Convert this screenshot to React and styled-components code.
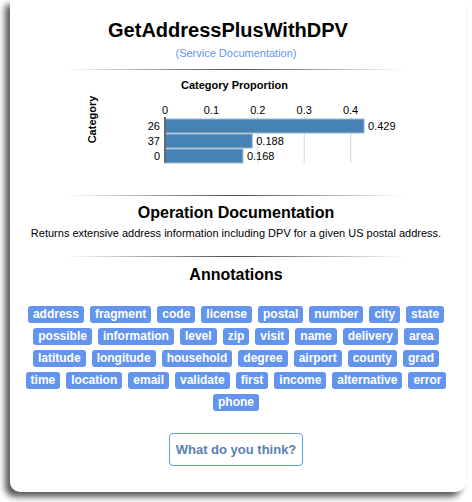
import React from 'react';
import styled, { createGlobalStyle } from 'styled-components';

const GlobalStyle = createGlobalStyle`
  html, body {
    margin: 0;
    padding: 0;
    background: #ffffff;
  }

  body {
    font-family: "Liberation Sans", Arial, sans-serif;
    color: #000;
  }
`;

const Page = styled.div`
  padding: 0 6px 10px 10px;
`;

const Card = styled.div`
  background: #fff;
  border-radius: 0 0 10px 10px;
  box-shadow: -5px 5px 6px rgba(0, 0, 0, 0.65);
  padding: 19px 4px 26px 0;
  display: flex;
  flex-direction: column;
  align-items: center;
  text-align: center;
`;

const Title = styled.h1`
  margin: 0;
  font-size: 20px;
  line-height: 23px;
  font-weight: bold;
  padding-right: 16px;
`;

const ServiceLink = styled.a`
  margin-top: 5px;
  font-size: 11px;
  line-height: 13px;
  color: #6495ed;
  text-decoration: none;
`;

const Divider = styled.hr`
  border: 0;
  height: 1px;
  width: 340px;
  margin: ${p => p.$top}px 0 0 -2px;
  background: linear-gradient(to right, rgba(0, 0, 0, 0), rgba(0, 0, 0, 0.7), rgba(0, 0, 0, 0));
`;

const ChartSvg = styled.svg`
  display: block;
  width: 452px;
  height: 116px;
  font-family: "Liberation Sans", Arial, sans-serif;
  font-size: 11px;
`;

const Heading = styled.h2`
  margin: ${p => p.$top}px 0 0;
  font-size: 16px;
  line-height: 19px;
  font-weight: bold;
`;

const Description = styled.p`
  margin: 5px 0 0;
  font-size: 11px;
  line-height: 13px;
`;

const TagCloud = styled.div`
  margin-top: 22px;
  width: 428px;
  display: flex;
  flex-wrap: wrap;
  justify-content: center;
  column-gap: 6px;
  row-gap: 5px;
`;

const Tag = styled.span`
  display: inline-block;
  height: 17px;
  line-height: 17px;
  padding: 0 5px;
  border-radius: 3px;
  background: #6495ed;
  color: #fff;
  font-size: 12px;
  font-weight: bold;
`;

const FeedbackButton = styled.button`
  margin-top: 22px;
  height: 33px;
  padding: 0 6px;
  background: #fff;
  border: 1px solid #5a9ee6;
  border-radius: 4px;
  color: #5a80b4;
  font-family: "Liberation Sans", Arial, sans-serif;
  font-size: 13px;
  font-weight: bold;
  cursor: pointer;
`;

const tags = [
  'address', 'fragment', 'code', 'license', 'postal', 'number', 'city', 'state',
  'possible', 'information', 'level', 'zip', 'visit', 'name', 'delivery', 'area',
  'latitude', 'longitude', 'household', 'degree', 'airport', 'county', 'grad',
  'time', 'location', 'email', 'validate', 'first', 'income', 'alternative', 'error',
  'phone',
];

const bars = [
  { label: '26', value: 0.429 },
  { label: '37', value: 0.188 },
  { label: '0', value: 0.168 },
];

// chart coords are relative to the svg (page x - 10, page y - 70)
const X0 = 155;
const UNIT = 464;
const BAND_TOP = 48.5;
const BAND = 15;

function CategoryChart() {
  const ticks = [0, 0.1, 0.2, 0.3, 0.4];
  return (
    <ChartSvg viewBox="0 0 452 116">
      <text x="224.5" y="18.5" textAnchor="middle" fontWeight="bold">Category Proportion</text>
      <text transform="translate(86,49.5) rotate(-90)" textAnchor="middle" fontWeight="bold">Category</text>
      {ticks.map(t => (
        <g key={t}>
          <text x={X0 + t * UNIT} y="44" textAnchor="middle">{t}</text>
          {t > 0 && (
            <line x1={X0 + t * UNIT} x2={X0 + t * UNIT} y1="47" y2="93" stroke="#d4d4d4" strokeWidth="1" />
          )}
        </g>
      ))}
      {bars.map((b, i) => {
        const y = BAND_TOP + i * BAND;
        const w = b.value * UNIT;
        return (
          <g key={b.label}>
            <rect x={X0 + 0.5} y={y + 0.5} width={w - 0.5} height={BAND - 1} fill="#4682b4" stroke="#9dbad6" strokeWidth="1" />
            <text x={X0 - 5} y={y + 11.5} textAnchor="end">{b.label}</text>
            <text x={X0 + w + 4} y={y + 11.5}>{b.value}</text>
          </g>
        );
      })}
      <line x1={X0} x2={X0} y1="47" y2="93" stroke="#666" strokeWidth="2" />
    </ChartSvg>
  );
}

export default function App() {
  return (
    <>
      <GlobalStyle />
      <Page>
        <Card>
          <Title>GetAddressPlusWithDPV</Title>
          <ServiceLink href="#">(Service Documentation)</ServiceLink>
          <Divider $top={9} />
          <CategoryChart />
          <Divider $top={9} />
          <Heading $top={7}>Operation Documentation</Heading>
          <Description>Returns extensive address information including DPV for a given US postal address.</Description>
          <Divider $top={16} />
          <Heading $top={8}>Annotations</Heading>
          <TagCloud>
            {tags.map(t => <Tag key={t}>{t}</Tag>)}
          </TagCloud>
          <FeedbackButton>What do you think?</FeedbackButton>
        </Card>
      </Page>
    </>
  );
}
